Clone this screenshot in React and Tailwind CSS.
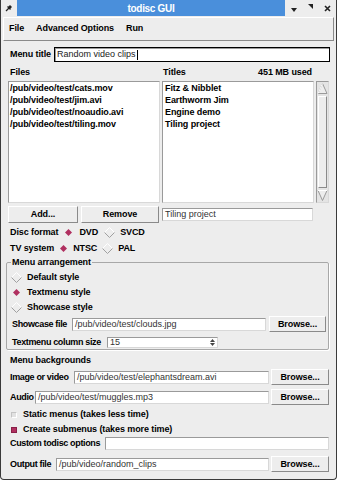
import React from "react";

const raised = "border border-t-white border-l-white border-b-[#8a8a8a] border-r-[#8a8a8a]";
const sunken = "border border-t-[#9a9a9a] border-l-[#9a9a9a] border-b-[#d8d8d8] border-r-[#d8d8d8]";
const bold = "text-[9px] font-bold tracking-[-0.1px] text-black whitespace-nowrap";
const label = `${bold} leading-none`;
const tight = "text-[9px] font-bold leading-none tracking-[-0.35px] text-black whitespace-nowrap";

function Radio({ on }) {
  return (
    <svg width="11" height="11" viewBox="0 0 11 11" className="shrink-0">
      {on ? (
        <polygon points="5.5,2 9,5.5 5.5,9 2,5.5" fill="#b03060" />
      ) : (
        <>
          <polyline points="0.5,5.5 5.5,0.5 10.5,5.5" fill="none" stroke="#ffffff" />
          <polyline points="0.5,5.5 5.5,10.5 10.5,5.5" fill="none" stroke="#a0a0a0" />
        </>
      )}
    </svg>
  );
}

function Check({ on }) {
  return (
    <span
      className={`inline-block h-[6px] w-[6px] shrink-0 border ${
        on
          ? "border-[#8a2048] bg-[#b03060]"
          : "border-t-[#c4c4c4] border-l-[#c4c4c4] border-b-white border-r-white bg-[#e2e2e2]"
      }`}
    />
  );
}

function Btn({ children, className = "" }) {
  return (
    <div className={`flex shrink-0 items-center justify-center bg-[#ededed] ${raised} ${label} ${className}`}>
      {children}
    </div>
  );
}

function Entry({ value, className = "" }) {
  return (
    <div
      className={`flex h-[13px] min-w-0 items-center overflow-hidden bg-white pl-[2px] text-[9px] leading-none text-[#333] whitespace-nowrap ${sunken} ${className}`}
    >
      {value}
    </div>
  );
}

function Browse() {
  return <Btn className="h-[16px] w-[58px]">Browse...</Btn>;
}

export default function App() {
  const files = [
    "/pub/video/test/cats.mov",
    "/pub/video/test/jim.avi",
    "/pub/video/test/noaudio.avi",
    "/pub/video/test/tiling.mov",
  ];
  const titles = ["Fitz & Nibblet", "Earthworm Jim", "Engine demo", "Tiling project"];

  return (
    <div className="h-[480px] w-[337px] bg-white font-['Liberation_Sans',Arial,sans-serif]">
      <div className="flex h-[480px] w-[337px] flex-col overflow-hidden rounded-b-[4px] border-x border-b border-[#3a3a3a] bg-[#ededed]">
        {/* title bar */}
        <div className="flex h-[16px] shrink-0 items-stretch">
          <div className="flex w-[16px] items-center justify-center">
            <svg width="8" height="8" viewBox="0 0 8 8">
              <path d="M1 7 L4 4" stroke="#222" strokeWidth="1.2" />
              <path d="M3 3 L5 1 L7 3 L5 5 Z" fill="#222" />
              <path d="M2.5 2.5 L5.5 5.5" stroke="#222" strokeWidth="1.2" />
            </svg>
          </div>
          <div className="flex flex-1 items-center justify-center bg-[#4a8fdb] text-[10px] font-bold tracking-[-0.3px] text-white">
            todisc GUI
          </div>
          <div className="flex w-[51px] items-center justify-between pl-[6px] pr-[5px]">
            <svg width="6" height="4" viewBox="0 0 6 4" className="mt-[3px]">
              <path d="M0 0 H6 L3 4 Z" fill="#222" />
            </svg>
            <svg width="5" height="5" viewBox="0 0 5 5" className="-mt-[3px]">
              <path d="M0 0 H5 V5 Z" fill="#222" />
            </svg>
            <svg width="7" height="7" viewBox="0 0 7 7">
              <path d="M1 1 L6 6 M6 1 L1 6" stroke="#222" strokeWidth="1.6" />
            </svg>
          </div>
        </div>

        {/* menubar */}
        <div className={`mx-[2px] mt-[1px] flex h-[24px] shrink-0 items-center gap-[12px] pb-[2px] pl-[5px] ${raised} ${label}`}>
          <span>File</span>
          <span>Advanced Options</span>
          <span>Run</span>
        </div>

        <div className="flex flex-col px-[7px]">
          {/* menu title */}
          <div className="mt-[5px] flex h-[17px] items-center">
            <span className={`pl-[2px] ${label}`}>Menu title</span>
            <div className="-mr-[1px] ml-[3px] flex h-[15px] flex-1 items-center border border-black bg-white pl-[2px] text-[9px] leading-none text-[#222] shadow-[inset_1px_1px_0_#9a9a9a]">
              Random video clips<span className="ml-[1px] inline-block h-[10px] w-px bg-black" />
            </div>
          </div>

          {/* headers */}
          <div className="mt-[3px] flex h-[13px] items-center">
            <span className={`w-[154px] pl-[2px] ${label}`}>Files</span>
            <span className={`pl-[1px] ${label}`}>Titles</span>
            <span className={`ml-auto mr-[17px] ${label}`}>451 MB used</span>
          </div>

          {/* lists */}
          <div className="mt-[2px] flex h-[122px] gap-[2px]">
            <div className={`w-[152px] bg-white pl-px ${sunken}`}>
              {files.map((f) => (
                <div key={f} className={`${bold} h-[12px] leading-[12px]`}>
                  {f}
                </div>
              ))}
            </div>
            <div className={`w-[152px] bg-white pl-[2px] ${sunken}`}>
              {titles.map((t) => (
                <div key={t} className={`${bold} h-[12px] leading-[12px]`}>
                  {t}
                </div>
              ))}
            </div>
            <div className={`flex w-[13px] flex-col bg-[#e4e4e4] ${sunken}`}>
              <svg width="11" height="13" viewBox="0 0 11 13" className="shrink-0">
                <path d="M5.5 1.5 L10 11.5 H1 Z" fill="#ededed" stroke="#9a9a9a" />
                <path d="M5.5 1.5 L1 11.5" stroke="#fff" />
              </svg>
              <div className={`mx-[1px] my-[1px] flex-1 bg-[#ededed] ${raised}`} />
              <svg width="11" height="13" viewBox="0 0 11 13" className="shrink-0">
                <path d="M1 1.5 H10 L5.5 11.5 Z" fill="#ededed" stroke="#9a9a9a" />
                <path d="M1 1.5 H10" stroke="#fff" />
              </svg>
            </div>
          </div>

          {/* buttons */}
          <div className="mt-[2px] flex h-[18px] items-center">
            <Btn className="h-[17px] w-[70px]">Add...</Btn>
            <Btn className="ml-[3px] h-[17px] w-[78px]">Remove</Btn>
            <Entry value="Tiling project" className="ml-[3px] w-[151px]" />
          </div>

          {/* disc format */}
          <div className="mt-[2px] flex h-[15px] items-center pl-[2px]">
            <span className={label}>Disc format</span>
            <span className="ml-[5px]"><Radio on /></span>
            <span className={`ml-[5px] ${label}`}>DVD</span>
            <span className="ml-[6px]"><Radio /></span>
            <span className={`ml-[5px] ${label}`}>SVCD</span>
          </div>
          <div className="mt-[1px] flex h-[15px] items-center pl-[2px]">
            <span className={label}>TV system</span>
            <span className="ml-[4px]"><Radio on /></span>
            <span className={`ml-[4px] ${label}`}>NTSC</span>
            <span className="ml-[5px]"><Radio /></span>
            <span className={`ml-[5px] ${label}`}>PAL</span>
          </div>

          {/* menu arrangement */}
          <fieldset className="-ml-[2px] mt-[1px] rounded-[2px] border border-[#a8a8a8] pb-[1px] pl-[4px] pr-[2px] shadow-[1px_1px_0_#fff]">
            <legend className={`px-[1px] leading-[11px] ${bold}`}>Menu arrangement</legend>
            <div className="mt-[2px] flex h-[15px] items-center">
              <Radio />
              <span className={`ml-[5px] ${label}`}>Default style</span>
            </div>
            <div className="flex h-[15px] items-center">
              <Radio on />
              <span className={`ml-[5px] ${label}`}>Textmenu style</span>
            </div>
            <div className="flex h-[15px] items-center">
              <Radio />
              <span className={`ml-[5px] ${label}`}>Showcase style</span>
            </div>
            <div className="mt-[1px] flex h-[16px] items-center">
              <span className={`w-[61px] pl-[1px] ${tight}`}>Showcase file</span>
              <Entry value="/pub/video/test/clouds.jpg" className="h-[12px] flex-1" />
              <span className="ml-[3px]">
                <Btn className="h-[16px] w-[57px]">Browse...</Btn>
              </span>
            </div>
            <div className="mt-[4px] flex h-[12px] items-center">
              <span className={`w-[96px] pl-[1px] ${tight}`}>Textmenu column size</span>
              <div className={`flex h-[11px] w-[111px] items-center bg-white pl-[2px] text-[9px] leading-none text-[#333] ${sunken}`}>
                15
                <div className="ml-auto mr-[2px] flex flex-col gap-px">
                  <svg width="5" height="3" viewBox="0 0 5 3"><path d="M2.5 0 L5 3 H0 Z" fill="#444" /></svg>
                  <svg width="5" height="3" viewBox="0 0 5 3"><path d="M0 0 H5 L2.5 3 Z" fill="#444" /></svg>
                </div>
              </div>
            </div>
          </fieldset>

          {/* menu backgrounds */}
          <div className="mt-[4px] flex h-[12px] items-center pl-[2px]">
            <span className={label}>Menu backgrounds</span>
          </div>
          <div className="mt-[3px] flex h-[16px] items-center">
            <span className={`w-[66px] pl-[2px] ${tight}`}>Image or video</span>
            <Entry value="/pub/video/test/elephantsdream.avi" className="h-[12px] flex-1" />
            <span className="ml-[2px]"><Browse /></span>
          </div>
          <div className="mt-[4px] flex h-[16px] items-center">
            <span className={`w-[27px] pl-[2px] ${tight}`}>Audio</span>
            <Entry value="/pub/video/test/muggles.mp3" className="h-[12px] flex-1" />
            <span className="ml-[2px]"><Browse /></span>
          </div>
          <div className="mt-[2px] flex h-[15px] items-center pl-[3px]">
            <Check />
            <span className={`ml-[6px] ${label}`}>Static menus (takes less time)</span>
          </div>
          <div className="flex h-[15px] items-center pl-[3px]">
            <Check on />
            <span className={`ml-[6px] ${label}`}>Create submenus (takes more time)</span>
          </div>
          <div className="flex h-[13px] items-center">
            <span className={`w-[97px] pl-[2px] ${tight}`}>Custom todisc options</span>
            <Entry value="" className="h-[12px] flex-1" />
          </div>
          <div className="mt-[6px] flex h-[16px] items-center">
            <span className={`w-[48px] pl-[2px] ${tight}`}>Output file</span>
            <Entry value="/pub/video/random_clips" className="h-[12px] flex-1" />
            <span className="ml-[2px]"><Browse /></span>
          </div>
        </div>
      </div>
    </div>
  );
}
